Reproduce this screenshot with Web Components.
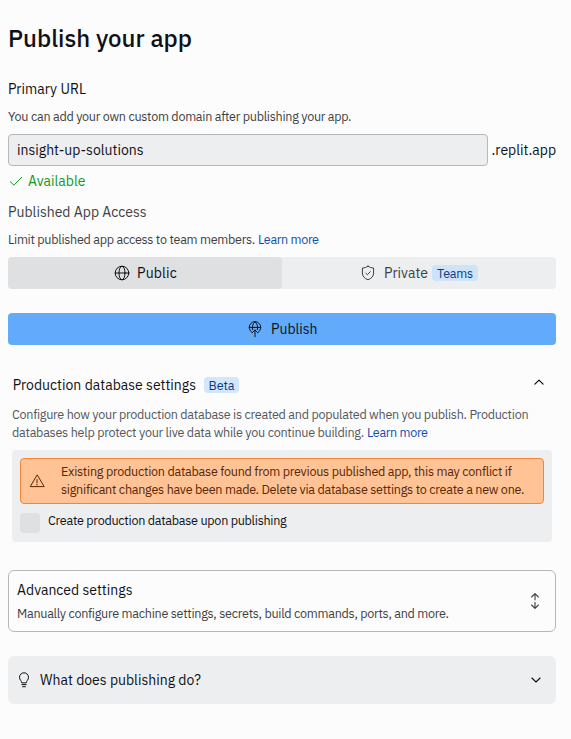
<!DOCTYPE html>
<html lang="en">
<head>
<meta charset="utf-8">
<title>Publish your app</title>
<style>
body{margin:0;background:#fcfcfc;font-family:"IBM Plex Sans",Roboto,"Noto Sans",sans-serif}
</style>
</head>
<body>
<publish-page></publish-page>
<script>
const ICONS={
globe:'<circle cx="8" cy="8" r="6.8"/><ellipse cx="8" cy="8" rx="3" ry="6.8"/><path d="M1.2 8h13.6"/>',
shield:'<path d="M8 1.2c1.6 1.2 3.4 1.7 5.6 1.8v5c0 3.3-2.2 5.5-5.6 6.8C4.600 13.500 2.400 11.300 2.400 8V3C4.600 2.900 6.400 2.400 8 1.200z"/><path d="M5.900 8.300l1.400 1.400 3-3"/>',
check:'<path d="M2.300 8.700l3.600 3.500 7.800-7.900"/>',
rocket:'<path d="M4.800 11.300a5.800 5.800 0 1 1 6.400 0M2.200 6.400h11.600M5.600 8.600C4.800 6 5.700 2.800 8 .8c2.300 2 3.200 5.200 2.400 7.800M8 15.700V9M5.200 11.800L8 9l2.800 2.800"/>',
warn:'<path d="M8 2.200L1.200 13.600h13.600z"/><path d="M8 6.500v3.200M8 11.200v.8"/>',
up:'<path d="M3.900 9.200L8 5.200l4.100 4"/>',
down:'<path d="M3.900 6L8 10l4.100-4"/>',
arrows:'<path d="M8 6.700V.8M4.600 4L8 .7 11.400 4M8 9.300v5.900M4.600 12L8 15.300l3.400-3.300"/>',
bulb:'<path d="M5.800 10.500C5.800 9 3.500 8 3.500 5.300a4.500 4.500 0 0 1 9 0C12.500 8 10.200 9 10.200 10.500zM5.900 12.600h4.200M6.600 14.700h2.800"/>'
};
function define(name,css,html,extra){
  const t=document.createElement('template');
  t.innerHTML=`<style>${css}</style>${html}`;
  customElements.define(name,class extends HTMLElement{
    constructor(){super();this.attachShadow({mode:'open'}).append(t.content.cloneNode(true));}
    connectedCallback(){if(extra)extra(this);}
  });
}
define('ui-icon',':host{display:block;flex:none;width:16px;height:16px}svg{display:block;width:100%;height:100%;overflow:visible;fill:none;stroke:currentColor;stroke-width:var(--stroke,1);stroke-linecap:round;stroke-linejoin:round}','<svg viewBox="0 0 16 16"></svg>',
  el=>{el.shadowRoot.querySelector('svg').innerHTML=ICONS[el.getAttribute('name')];});
/* A single line of text, tracked so that it fills the width given in "w". */
define('ui-text',':host{display:inline-block;flex:none;width:max-content;align-self:flex-start;white-space:nowrap;font-size:14px;line-height:20px;color:#0e1116}:host([small]){font-size:12.600px;line-height:16px;padding-bottom:2px}:host([title]){font-size:24px;line-height:30px;font-weight:500}:host([dim]){color:#3c3f44}:host([link]){color:#0f4fae}','<slot></slot>',
  el=>{const w=+el.getAttribute('w');const n=el.textContent.length;
    el.style.letterSpacing=((w-el.getBoundingClientRect().width)/n)+'px';
    el.style.width=w+'px';});
define('ui-badge',':host{display:flex;align-items:center;justify-content:center;box-sizing:border-box;height:16px;border-radius:4px;background:#cce3fa}','<slot></slot>');
define('url-field',':host{display:flex;align-items:center;gap:4px;height:32px}div{box-sizing:border-box;width:480px;height:32px;border:1px solid #b5b8bb;border-radius:4px;background:#edeef0;padding:5px 8px;display:flex}::slotted([slot]){align-self:center}','<div><slot></slot></div><slot name="suffix"></slot>');
define('access-toggle',':host{display:flex;height:32px;border-radius:4px;background:#edeef0}div{width:50%;display:flex;align-items:center;box-sizing:border-box}::slotted(*){align-self:center}.on{background:#dfe0e2;border-radius:4px;padding-left:106px;color:#0e1116}.off{padding-left:78px;color:#3c3f44}',
 '<div class="on"><slot name="on"></slot></div><div class="off"><slot name="off"></slot></div>');
define('publish-button',':host{display:flex;align-items:center;height:32px;border-radius:4px;background:#62abfa;padding-left:239px;gap:8px;color:#0e1116}::slotted(*){align-self:center}','<slot></slot>');
define('db-alert',':host{display:flex;align-items:center;box-sizing:border-box;height:46px;border:1px solid #f98236;border-radius:4px;background:#ffc396;padding-left:8px;color:#5a2606;gap:16px}.t{display:flex;flex-direction:column}','<ui-icon name="warn"></ui-icon><div class="t"><slot></slot></div>');
define('db-panel',':host{display:block;box-sizing:border-box;height:92px;margin:8px 4px 0;padding:8px;background:#edeef0;border-radius:4px}.c{display:flex;gap:8px;margin-top:9px}i{width:20px;height:20px;border-radius:4px;background:#dfe0e2}','<slot name="alert"></slot><div class="c"><i></i><slot></slot></div>');
define('settings-card',':host{display:flex;align-items:center;justify-content:space-between;box-sizing:border-box;height:62px;border:1px solid #b5b8bb;border-radius:6px;padding:0 12px 0 8px;color:#3c3f44}.t{display:flex;flex-direction:column;gap:5px}ui-icon{--stroke:1.100}','<div class="t"><slot></slot></div><ui-icon name="arrows"></ui-icon>');
define('help-card',':host{display:flex;align-items:center;height:48px;border-radius:6px;background:#edeef0;padding:0 12px 0 8px;color:#0e1116}.g{flex:1;margin-left:8px;display:flex}ui-icon[name=down]{--stroke:1.100}','<ui-icon name="bulb"></ui-icon><div class="g"><slot></slot></div><ui-icon name="down"></ui-icon>');
define('publish-page',`:host{display:flex;flex-direction:column;box-sizing:border-box;width:571px;height:739px;padding:23px 15px 0 8px}
.r{display:flex;align-items:center}.db{height:20px;margin-top:30px;padding:0 9px 0 4.700px}.db ui-badge{width:35px;margin:0 auto 0 8px;background:#d2e6fc}
.conf ui-text{color:#53575d}.conf ui-text[link]{color:#0f4fae}db-alert ui-text{color:#5a2606}ui-badge ui-text{color:#0b3c82;padding:0}`,`
<ui-text title w="184">Publish your app</ui-text>
<ui-text w="78" style="margin-top:26px">Primary URL</ui-text>
<ui-text small dim w="343.200" style="margin-top:9px">You can add your own custom domain after publishing your app.</ui-text>
<url-field style="margin-top:8px"><ui-text w="126.500">insight-up-solutions</ui-text><ui-text slot="suffix" w="64.500">.replit.app</ui-text></url-field>
<div class="r" style="margin-top:5px;gap:4px;color:#10991f"><ui-icon name="check"></ui-icon><ui-text w="57.500" style="color:#10991f">Available</ui-text></div>
<ui-text dim w="138.500" style="margin-top:11px">Published App Access</ui-text>
<div class="r" style="margin-top:9px;gap:3px"><ui-text small dim w="247">Limit published app access to team members.</ui-text><ui-text small link w="60.700">Learn more</ui-text></div>
<access-toggle style="margin-top:8px"><ui-icon slot="on" name="globe"></ui-icon><ui-text slot="on" w="40" style="margin-left:7px">Public</ui-text>
<ui-icon slot="off" name="shield"></ui-icon><ui-text slot="off" dim w="44" style="margin:0 4px 0 8px">Private</ui-text><ui-badge slot="off" style="width:46px"><ui-text small w="36">Teams</ui-text></ui-badge></access-toggle>
<publish-button style="margin-top:24px"><ui-icon name="rocket"></ui-icon><ui-text w="46.500">Publish</ui-text></publish-button>
<div class="r db"><ui-text w="183.300">Production database settings</ui-text><ui-badge><ui-text small w="26">Beta</ui-text></ui-badge><ui-icon name="up" style="--stroke:1.100;margin-top:-5px"></ui-icon></div>
<div class="conf" style="margin:11px 0 0 4px;height:36px"><div class="r"><ui-text small w="516.200">Configure how your production database is created and populated when you publish. Production</ui-text></div><div class="r" style="gap:3px"><ui-text small w="352">databases help protect your live data while you continue building.</ui-text><ui-text small link w="60.700">Learn more</ui-text></div></div>
<db-panel><db-alert slot="alert"><ui-text small w="450.500">Existing production database found from previous published app, this may conflict if</ui-text><ui-text small w="463">significant changes have been made. Delete via database settings to create a new one.</ui-text></db-alert><ui-text small w="238.500" style="margin-top:-1px">Create production database upon publishing</ui-text></db-panel>
<settings-card style="margin-top:28px"><ui-text w="115.500">Advanced settings</ui-text><ui-text small dim w="431.500">Manually configure machine settings, secrets, build commands, ports, and more.</ui-text></settings-card>
<help-card style="margin-top:24px"><ui-text w="161">What does publishing do?</ui-text></help-card>`);
</script>
</body>
</html>
